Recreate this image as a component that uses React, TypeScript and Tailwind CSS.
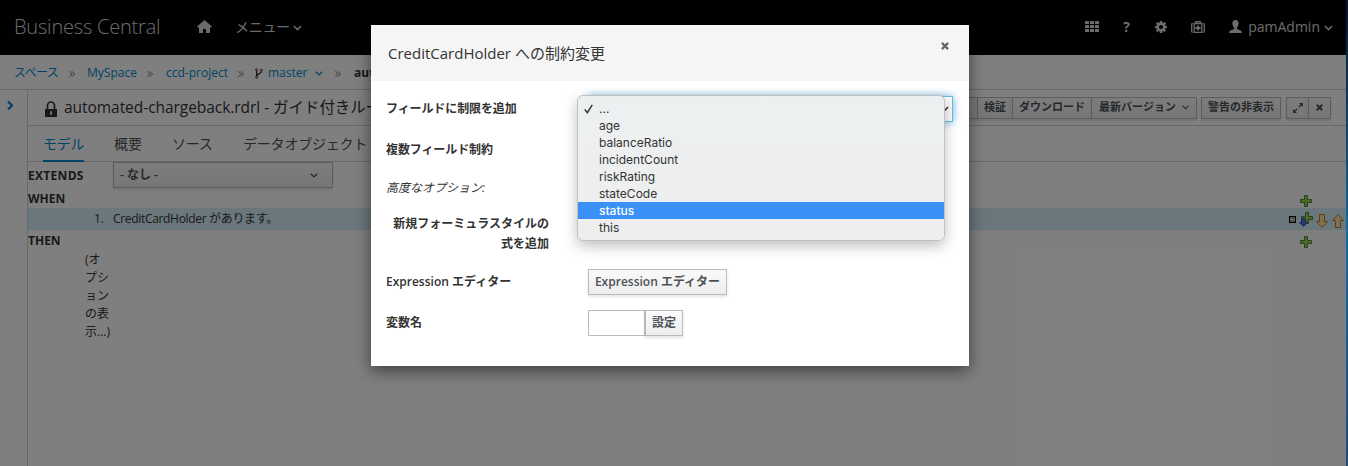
import React from 'react';

type SvgProps = { className?: string };

const Chevron = ({ className = '' }: SvgProps) => (
  <svg className={'shrink-0 ' + className} viewBox="0 0 10 6" fill="none" stroke="currentColor" strokeWidth="1.6">
    <path d="M1 .8l4 4 4-4" />
  </svg>
);

const HomeIcon = () => (
  <svg className="h-[13px] w-[15px] shrink-0" viewBox="0 0 15 13" fill="currentColor">
    <path d="M7.500 0L15 6.600 14.200 7.500H13V12.500Q13 13 12.500 13H9V9H6V13H2.500Q2 13 2 12.500V7.500H.8L0 6.600Z" />
  </svg>
);

const GridIcon = () => (
  <svg className="h-[11px] w-[14px] shrink-0" viewBox="0 0 14 11" fill="currentColor">
    {[0, 4, 8].map((y) =>
      [0, 5, 10].map((x) => <rect key={x + '-' + y} x={x} y={y} width="4" height="3" rx=".5" />)
    )}
  </svg>
);

const GearIcon = () => (
  <svg className="h-3 w-3 shrink-0" viewBox="0 0 12 12">
    <g fill="currentColor">
      {[0, 45, 90, 135].map((a) => (
        <rect key={a} x="4.700" y="0" width="2.600" height="12" rx=".5" transform={`rotate(${a} 6 6)`} />
      ))}
    </g>
    <circle cx="6" cy="6" r="3.300" fill="none" stroke="currentColor" strokeWidth="2.600" />
    <circle cx="6" cy="6" r="2" fill="#030303" />
  </svg>
);

const KitIcon = () => (
  <svg className="h-3 w-[14px] shrink-0" viewBox="0 0 14 12" fill="none" stroke="currentColor" strokeWidth="1.300">
    <path d="M4.800 2.500V.7h4.400v1.800M3.200 2.500h7.600v8.800H3.200zM1.800 2.500Q.7 2.500.7 3.600V10.200Q.7 11.300 1.800 11.300M12.200 2.500Q13.300 2.500 13.300 3.600V10.200Q13.300 11.300 12.200 11.300" />
    <path d="M7 4.500v5M4.500 7h5" strokeWidth="1.900" />
  </svg>
);

const UserIcon = () => (
  <svg className="h-[13px] w-[13px] shrink-0" viewBox="0 0 13 13" fill="currentColor">
    <path d="M6.500 0C8.700 0 9.700 1.600 9.600 3.500 9.500 5.400 8.700 6.900 7.900 7.500V8.900L11.700 10.500Q13 11.100 13 13H0Q0 11.100 1.300 10.500L5.100 8.900V7.500C4.300 6.900 3.500 5.400 3.400 3.500 3.300 1.600 4.300 0 6.500 0Z" />
  </svg>
);

const ForkIcon = () => (
  <svg className="mr-[5px] h-[11px] w-2 shrink-0" viewBox="0 0 8 11" fill="none" stroke="currentColor">
    <circle cx="1.600" cy="1.600" r="1" />
    <circle cx="1.600" cy="9.300" r="1" />
    <circle cx="6.400" cy="2.300" r="1" />
    <path d="M1.600 2.500v6M6.400 3.300c0 3-4.800 2-4.800 5" strokeWidth="1.300" />
  </svg>
);

const LockIcon = () => (
  <svg className="mt-[3px] h-4 w-3 shrink-0" viewBox="0 0 12 16">
    <path d="M2.500 8V4.500a3.500 3.500 0 017 0V8" fill="none" stroke="currentColor" strokeWidth="1.700" />
    <path fillRule="evenodd" d="M0 8h12v8H0zM5.200 10.300v1.900l-.3 1.500h2.200l-.3-1.500v-1.900z" fill="currentColor" />
  </svg>
);

const CrossIcon = ({ className = '' }: SvgProps) => (
  <svg className={'shrink-0 ' + className} viewBox="0 0 8 8" stroke="currentColor" strokeWidth="2.200">
    <path d="M.9.9l6.200 6.200M7.100.9L.9 7.100" />
  </svg>
);

const ExpandIcon = () => (
  <svg className="h-[10px] w-[10px]" viewBox="0 0 10 10" fill="none" stroke="currentColor">
    <path d="M5.800 4.200L8.500 1.500M4.200 5.800L1.500 8.500" strokeWidth="1.300" />
    <path d="M6 0h4v4zM4 10H0V6z" fill="currentColor" stroke="none" />
  </svg>
);

const Plus = ({ className = '' }: SvgProps) => (
  <svg className={'h-3 w-3 shrink-0 ' + className} viewBox="0 0 12 12">
    <path d="M4.500.5h3v4h4v3h-4v4h-3v-4h-4v-3h4z" fill="#a5cf4c" stroke="#3f8c3c" />
  </svg>
);

const PlusDown = () => (
  <svg className="h-[15px] w-[14px] shrink-0" viewBox="0 0 14 15">
    <path d="M6.500.5h3v4h4v3h-4v4h-3v-4h-4v-3h4z" fill="#a5cf4c" stroke="#3f8c3c" />
    <path d="M2.500 6.500h4v4h2L4.500 14.500.5 10.500h2z" fill="#4d78d0" stroke="#345bb0" />
  </svg>
);

const Arrow = ({ className = '' }: SvgProps) => (
  <svg className={'h-[14px] w-3 shrink-0 ' + className} viewBox="0 0 12 14">
    <path d="M3.500.5h5v7h3L6 13.500.5 7.500h3z" fill="#f8e4a6" stroke="#c47b16" />
  </svg>
);

const Crumb = ({ children, className }: { children: React.ReactNode; className: string }) => (
  <span className={'shrink-0 text-[#0088ce] ' + className}>{children}</span>
);

const Sep = ({ className = '' }: SvgProps) => (
  <svg className={'mt-[2px] h-[6px] w-[6px] shrink-0 text-[#777] ' + className} viewBox="0 0 6 6" fill="none" stroke="currentColor">
    <path d="M.5.300L3 3 .5 5.700M3 .3L5.500 3 3 5.700" />
  </svg>
);

const toolButton =
  'flex h-[22px] shrink-0 items-center justify-center whitespace-nowrap border border-[#bbb] bg-gradient-to-b from-[#fafafa] to-[#ededed] text-[11px] font-semibold text-[#4d5258] shadow-[0_2px_3px_rgba(3,3,3,0.1)]';

const formButton =
  'flex h-[26px] items-center justify-center whitespace-nowrap border border-[#bbb] bg-gradient-to-b from-[#fafafa] to-[#ededed] text-[12px] font-semibold text-[#4d5258] shadow-[0_2px_3px_rgba(3,3,3,0.1)]';

const fields = ['...', 'age', 'balanceRatio', 'incidentCount', 'riskRating', 'stateCode', 'status', 'this'];

function Header() {
  return (
    <header className="flex h-[55px] items-center bg-[#030303] pb-[2px] text-[#d8d8d8]">
      <div className="ml-[14px] w-[183px] whitespace-nowrap text-[20px] font-light tracking-[-0.2px]">Business Central</div>
      <HomeIcon />
      <div className="ml-[23px] flex items-center text-[14px]">
        <span className="whitespace-nowrap tracking-[-0.3px]">メニュー</span>
        <Chevron className="ml-[3px] mt-[2px] h-[6px] w-[9px]" />
      </div>
      <div className="ml-auto mr-[13px] flex items-center">
        <GridIcon />
        <span className="ml-[24px] w-[8px] text-[14px] font-bold">?</span>
        <span className="ml-[24px] flex"><GearIcon /></span>
        <span className="ml-[24px] flex"><KitIcon /></span>
        <span className="ml-[24px] flex"><UserIcon /></span>
        <span className="ml-[6px] text-[14px]">pamAdmin</span>
        <Chevron className="ml-[4px] mt-[2px] h-[6px] w-[9px]" />
      </div>
    </header>
  );
}

function Workspace() {
  return (
    <div className="flex h-[376px]">
      <aside className="w-[27px] shrink-0 pt-[10px] text-[#0088ce]">
        <svg className="ml-[7px] h-[11px] w-[7px]" viewBox="0 0 7 11" fill="none" stroke="currentColor" strokeWidth="2.300">
          <path d="M1 1.500l4 4-4 4" />
        </svg>
      </aside>
      <main className="min-w-0 flex-1 border-l border-[#d1d1d1]">
        <div className="flex h-9 items-center border-b border-[#d1d1d1] pl-[17px]">
          <LockIcon />
          <div className="ml-[7px] whitespace-nowrap text-[15.500px] tracking-[-0.05px]">automated-chargeback.rdrl - ガイド付きルール</div>
          <div className="ml-auto mr-[15px] flex">
            <div className={toolButton + ' w-[60px]'}>コピー</div>
            <div className={toolButton + ' -ml-px w-[36px]'}>検証</div>
            <div className={toolButton + ' -ml-px w-[80px]'}>ダウンロード</div>
            <div className={toolButton + ' -ml-px w-[106px]'}>
              最新バージョン
              <Chevron className="ml-[6px] h-[5px] w-[7px]" />
            </div>
            <div className={toolButton + ' ml-[4px] w-[80px]'}>警告の非表示</div>
            <div className={toolButton + ' ml-[5px] w-[23px]'}><ExpandIcon /></div>
            <div className={toolButton + ' -ml-px w-[23px]'}><CrossIcon className="h-[7px] w-[7px]" /></div>
          </div>
        </div>
        <nav className="flex h-9 items-stretch border-b border-[#d1d1d1] pl-[15px] text-[14px] leading-[35px] text-[#4d5258]">
          <div className="h-9 w-[41px] whitespace-nowrap border-b-2 border-[#0088ce] text-[#0088ce] tracking-[-0.3px]">モデル</div>
          <div className="ml-[30px] w-[28px] whitespace-nowrap">概要</div>
          <div className="ml-[30px] w-[40px] whitespace-nowrap tracking-[-0.3px]">ソース</div>
          <div className="ml-[31px] whitespace-nowrap tracking-[-0.2px]">データオブジェクト</div>
        </nav>
        <div className="flex h-[27px] text-[12px]">
          <div className="w-[85px] font-bold leading-[27px] tracking-[0.3px]">EXTENDS</div>
          <div className="flex h-[26px] w-[220px] items-center justify-between border border-[#bbb] bg-gradient-to-b from-[#fafafa] to-[#ededed] pl-[6px] pr-[14px] font-semibold text-[#4d5258] shadow-[0_2px_3px_rgba(3,3,3,0.1)]">
            - なし -
            <Chevron className="h-[5px] w-2" />
          </div>
        </div>
        <div className="flex h-[19px] items-center text-[12px] font-bold">
          WHEN
          <Plus className="ml-auto mr-[34px] mt-[4px]" />
        </div>
        <div className="flex h-[22px] items-center bg-[#d4effa] text-[12px]">
          <span className="ml-[66px] w-[19px]">1.</span>
          <span className="whitespace-nowrap tracking-[-0.32px]">CreditCardHolder があります。</span>
          <div className="ml-auto mr-[2px] flex items-center">
            <svg className="h-[9px] w-[9px]" viewBox="0 0 9 9">
              <rect width="9" height="9" fill="#e9def5" />
              <rect x="1.500" y="1.500" width="6" height="6" fill="#999" stroke="#000" />
              <path d="M2 4.500h5" stroke="#eee" />
            </svg>
            <span className="ml-[2px] flex"><PlusDown /></span>
            <span className="ml-[3px] mt-[3px] flex"><Arrow /></span>
            <span className="ml-[4px] mt-[3px] flex"><Arrow className="rotate-180" /></span>
          </div>
        </div>
        <div className="flex h-[21px] items-center text-[12px] font-bold">
          THEN
          <Plus className="ml-auto mr-[34px] mt-[3px]" />
        </div>
        <div className="ml-[57px] w-[30px] text-[12px] leading-[18px]">
          (オ<br />プシ<br />ョン<br />の表<br />示...)
        </div>
      </main>
    </div>
  );
}

function FieldMenu() {
  return (
    <ul className="absolute left-[206px] top-[70px] w-[368px] rounded-[6px] border border-[#bfc1c3] bg-gradient-to-b from-[#edf0f1] to-[#eee] pb-[4px] pt-[4px] font-['Inter'] text-[12px] font-normal text-[#333] shadow-[0_5px_14px_rgba(0,0,0,0.25)]">
      {fields.map((name, i) => (
        <li
          key={name}
          className={'flex h-[17px] items-center pl-[6px] ' + (name === 'status' ? 'bg-[#3990f7] font-medium text-white' : '')}
        >
          <span className="flex w-[15px]">
            {i === 0 && (
              <svg className="h-[10px] w-[9px]" viewBox="0 0 9 10" fill="none" stroke="currentColor" strokeWidth="1.400">
                <path d="M.8 5.500L3.300 8.700 8.300.8" />
              </svg>
            )}
          </span>
          {name}
        </li>
      ))}
    </ul>
  );
}

function Dialog() {
  return (
    <section className="relative h-[341px] w-[598px] bg-white text-[12px] font-semibold shadow-[0_5px_15px_rgba(0,0,0,0.5)]">
      <div className="flex h-[56px] items-center justify-between bg-[#f5f5f5] pl-[17px] pr-[20px]">
        <h1 className="text-[15px] font-normal">CreditCardHolder への制約変更</h1>
        <CrossIcon className="mb-[14px] h-2 w-2 text-[#666]" />
      </div>
      <div className="pl-[15px] pr-4 pt-[15px]">
        <div className="flex h-[26px] items-center justify-between">
          <span className="tracking-[-0.1px]">フィールドに制限を追加</span>
          <div className="flex h-[26px] w-[365px] items-center justify-end border border-[#66bde8] bg-[#fafafa] pr-[3px] shadow-[0_0_8px_rgba(0,136,206,0.6)]">
            <Chevron className="h-[6px] w-[9px]" />
          </div>
        </div>
        <div className="mt-[15px] flex h-[26px] items-center tracking-[-0.1px]">複数フィールド制約</div>
        <div className="mt-[15px] h-[20px] font-normal italic leading-[20px]">高度なオプション:</div>
        <div className="mt-[16px] h-10 w-[163px] whitespace-nowrap text-right leading-[20px]">新規フォーミュラスタイルの<br />式を追加</div>
        <div className="mt-[15px] flex h-[26px] items-center">
          <span className="w-[202px]">Expression エディター</span>
          <div className={formButton + ' w-[139px]'}>Expression エディター</div>
        </div>
        <div className="mt-[15px] flex h-[26px] items-center">
          <span className="w-[202px]">変数名</span>
          <div className="h-[26px] w-[57px] border border-[#bbb] bg-white" />
          <div className={formButton + ' w-[38px]'}>設定</div>
        </div>
      </div>
      <FieldMenu />
    </section>
  );
}

export default function App() {
  return (
    <div className="relative flex h-[466px] w-[1348px] overflow-hidden bg-white font-['Open_Sans','Noto_Sans_CJK_JP',sans-serif] text-[#333]">
      <div className="w-[1346px] shrink-0">
        <Header />
        <div className="flex h-[35px] items-center border-b border-[#d1d1d1] pl-[14px] pt-[2px] text-[12px]">
          <Crumb className="w-[55px] tracking-[-0.6px]">スペース</Crumb>
          <Sep />
          <Crumb className="ml-[12px] w-[60px]">MySpace</Crumb>
          <Sep />
          <Crumb className="ml-[13px] w-[72px]">ccd-project</Crumb>
          <Sep />
          <span className="ml-[11px] flex"><ForkIcon /></span>
          <Crumb className="w-[47px]">master</Crumb>
          <Chevron className="h-[5px] w-2 text-[#0088ce]" />
          <Sep className="ml-[12px]" />
          <span className="ml-[13px] font-bold">automated-chargeback.rdrl</span>
        </div>
        <Workspace />
      </div>
      <div className="absolute inset-0 flex items-start bg-black/50 pl-[371px] pt-[25px]">
        <Dialog />
      </div>
      <div className="absolute right-0 top-0 h-full w-[2px] bg-gradient-to-b from-[#06142c] via-[#0a6ea8] to-[#1b4a80]" />
    </div>
  );
}
